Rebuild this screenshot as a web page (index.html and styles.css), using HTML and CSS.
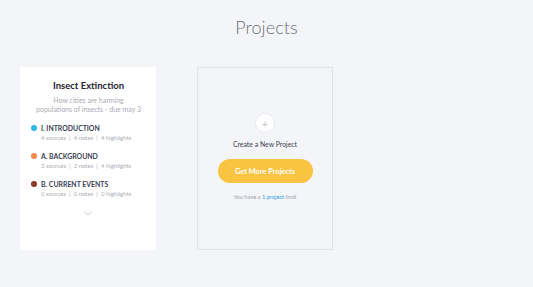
FILE: index.html
```html
<!DOCTYPE html>
<html>
<head>
<meta charset="utf-8">
<link rel="stylesheet" href="styles.css">
</head>
<body>
<h1 class="page-title">Projects</h1>
<div class="cards">
  <div class="card project">
    <div class="project-title">Insect Extinction</div>
    <div class="project-desc">How cities are harming<br>populations of insects - due may 3</div>
    <ul class="sections">
      <li class="section">
        <div class="section-name"><span class="dot dot-blue"></span>I. INTRODUCTION</div>
        <div class="section-meta">4 sources &nbsp;|&nbsp; 4 notes &nbsp;|&nbsp; 4 highlights</div>
      </li>
      <li class="section">
        <div class="section-name"><span class="dot dot-orange"></span>A. BACKGROUND</div>
        <div class="section-meta">3 sources &nbsp;|&nbsp; 2 notes &nbsp;|&nbsp; 4 highlights</div>
      </li>
      <li class="section">
        <div class="section-name"><span class="dot dot-brown"></span>B. CURRENT EVENTS</div>
        <div class="section-meta">0 sources &nbsp;|&nbsp; 0 notes &nbsp;|&nbsp; 0 highlights</div>
      </li>
    </ul>
    <svg class="chevron" width="8" height="5" viewBox="0 0 8 5"><path d="M0.5 0.5 L4 4 L7.5 0.5" fill="none" stroke="#c4c7d0" stroke-width="1"/></svg>
  </div>
  <div class="card new-project">
    <div class="plus-circle">+</div>
    <div class="new-label">Create a New Project</div>
    <button class="more-btn">Get More Projects</button>
    <div class="limit">You have a <span class="link">1 project</span> limit</div>
  </div>
</div>
</body>
</html>
```
FILE: styles.css
```css
html, body {
  margin: 0;
  padding: 0;
  background: #f4f5f9;
  font-family: Lato, "Noto Sans", sans-serif;
}
.page-title {
  margin: 0;
  padding-top: 15px;
  height: 52px;
  box-sizing: border-box;
  text-align: center;
  font-weight: 300;
  font-size: 18px;
  line-height: 24px;
  color: #6c6e78;
  letter-spacing: 0.1px;
}
.cards {
  display: flex;
  gap: 41px;
  padding-left: 20px;
  padding-top: 15px;
}
.card {
  width: 136px;
  height: 183px;
  box-sizing: border-box;
}
.project {
  background: #fff;
  padding: 13px 12px 0 11px;
  display: flex;
  flex-direction: column;
}
.project-title {
  text-align: center;
  font-weight: 700;
  font-size: 9.5px;
  line-height: 12px;
  color: #1f2230;
  padding-left: 2px;
}
.project-desc {
  margin-top: 4px;
  text-align: center;
  font-size: 7px;
  line-height: 9px;
  color: #a9abb3;
  padding-left: 2px;
}
.sections {
  list-style: none;
  margin: 9px 0 0 0;
  padding: 0;
  display: flex;
  flex-direction: column;
  gap: 8px;
}
.section-name {
  display: flex;
  align-items: center;
  font-weight: 700;
  font-size: 6.9px;
  line-height: 10px;
  color: #3b3e52;
}
.dot {
  width: 6px;
  height: 6px;
  border-radius: 50%;
  margin-right: 4px;
  flex: none;
}
.dot-blue { background: #2ab8e8; }
.dot-orange { background: #f2884b; }
.dot-brown { background: #8a3a26; }
.section-meta {
  padding-left: 10px;
  font-size: 6px;
  line-height: 10px;
  color: #abadb6;
  white-space: nowrap;
}
.chevron {
  align-self: center;
  margin-top: 12px;
}
.new-project {
  border: 1px solid #e1e3e9;
  display: flex;
  flex-direction: column;
  align-items: center;
  padding-top: 45px;
}
.plus-circle {
  width: 20px;
  height: 20px;
  border-radius: 50%;
  background: #fff;
  border: 1px solid #e9eaef;
  box-sizing: border-box;
  display: flex;
  align-items: center;
  justify-content: center;
  color: #c8cad1;
  font-size: 11px;
  line-height: 1;
}
.new-label {
  margin-top: 6px;
  font-size: 6.9px;
  line-height: 10px;
  color: #3d3f49;
}
.more-btn {
  margin-top: 10px;
  width: 95px;
  height: 24px;
  border: none;
  border-radius: 12px;
  background: #f9c441;
  color: #fff;
  font-family: Lato, "Noto Sans", sans-serif;
  font-weight: 700;
  font-size: 7.4px;
  padding: 0;
}
.limit {
  margin-top: 9px;
  font-size: 5.7px;
  line-height: 10px;
  color: #9c9ea8;
}
.link { color: #2e9ee0; }
```
